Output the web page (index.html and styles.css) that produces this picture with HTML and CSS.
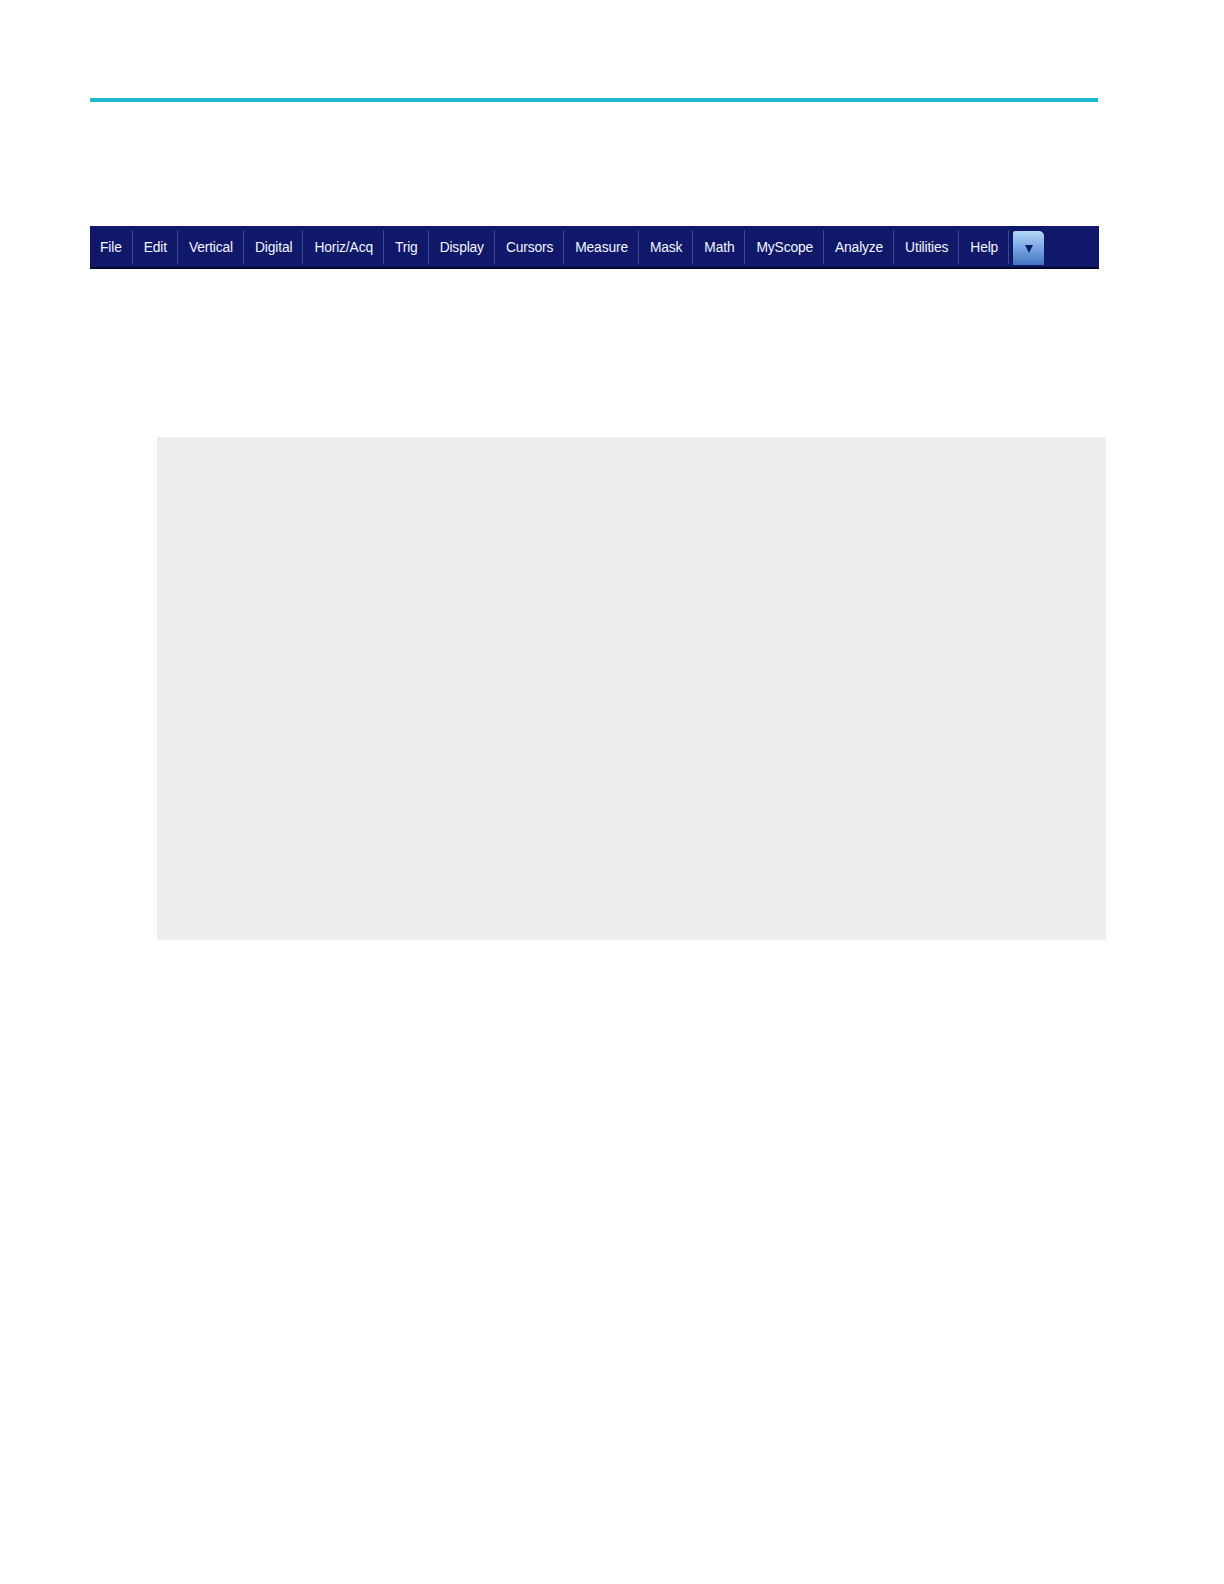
FILE: index.html
```html
<!DOCTYPE html>
<html>
<head>
<meta charset="utf-8">
<link rel="stylesheet" href="styles.css">
</head>
<body>
<div class="page">
  <div class="rule"></div>
  <div class="menubar">
    <span class="item">File</span>
    <span class="item">Edit</span>
    <span class="item">Vertical</span>
    <span class="item">Digital</span>
    <span class="item">Horiz/Acq</span>
    <span class="item">Trig</span>
    <span class="item">Display</span>
    <span class="item">Cursors</span>
    <span class="item">Measure</span>
    <span class="item">Mask</span>
    <span class="item">Math</span>
    <span class="item">MyScope</span>
    <span class="item">Analyze</span>
    <span class="item">Utilities</span>
    <span class="item">Help</span>
    <span class="dropbtn"><span class="tri"></span></span>
  </div>
  <div class="panel"></div>
</div>
</body>
</html>
```
FILE: styles.css
```css
html, body {
  margin: 0;
  padding: 0;
  background: #ffffff;
  font-family: "Liberation Sans", Arial, sans-serif;
  overflow: hidden;
}
.page {
  padding-top: 98px;
}
.rule {
  margin-left: 90px;
  width: 1008px;
  height: 4px;
  background: #20b6d3;
}
.menubar {
  margin-top: 124px;
  margin-left: 90px;
  width: 1009px;
  height: 43px;
  box-sizing: border-box;
  background: #0f1869;
  border-bottom: 2px solid #05082a;
  display: flex;
  align-items: stretch;
}
.item {
  display: flex;
  align-items: center;
  padding: 1px 10px 0 11px;
  color: #f4f6ff;
  font-size: 13.8px;
  letter-spacing: -0.14px;
  border-right: 1px solid #3a4794;
  margin: 4px 0 3px 0;
}
.item:first-child {
  padding-left: 10px;
}
.dropbtn {
  align-self: center;
  margin-left: 4px;
  margin-top: 3px;
  width: 31px;
  height: 34px;
  border-radius: 2px 5px 0 0;
  background: linear-gradient(#b4d7f7, #80ace4 45%, #4273c2);
  display: flex;
  align-items: center;
  justify-content: center;
}
.tri {
  width: 0;
  height: 0;
  border-left: 4px solid transparent;
  border-right: 4px solid transparent;
  border-top: 8px solid #0b1a66;
  margin-top: 2px;
}
.panel {
  margin-top: 168px;
  margin-left: 157px;
  width: 949px;
  height: 503px;
  background: #eeeeee;
}
```
